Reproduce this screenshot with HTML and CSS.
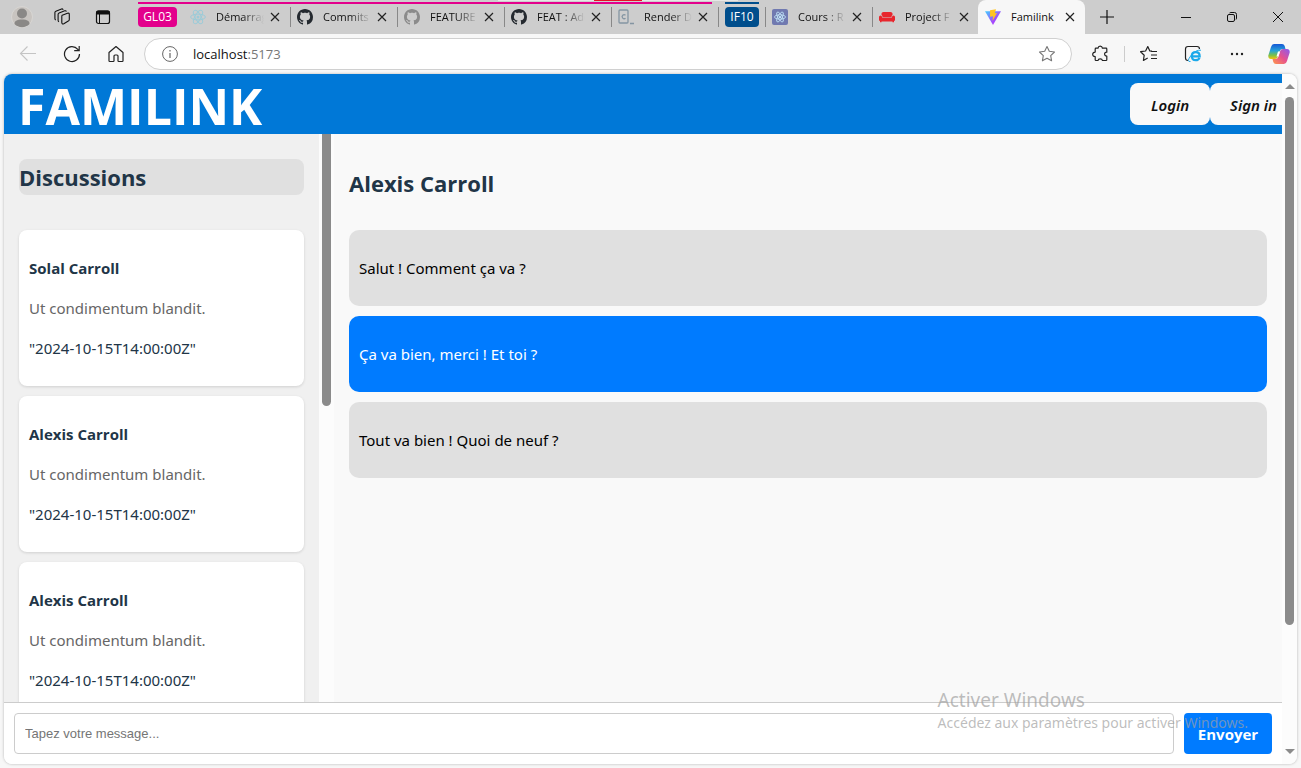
FILE: index.html
```
<!DOCTYPE html>
<html lang="fr">
<head>
<meta charset="utf-8">
<title>Familink</title>
<link rel="stylesheet" href="styles.css">
</head>
<body>
<svg class="defs" aria-hidden="true">
  <symbol id="github" viewBox="0 0 16 16"><path fill="currentColor" d="M8 0C3.58 0 0 3.58 0 8c0 3.54 2.29 6.53 5.47 7.59.4.07.55-.17.55-.38 0-.19-.01-.82-.01-1.49-2.01.37-2.53-.49-2.69-.94-.09-.23-.48-.94-.82-1.13-.28-.15-.68-.52-.01-.53.63-.01 1.08.58 1.23.82.72 1.21 1.87.87 2.33.66.07-.52.28-.87.51-1.07-1.78-.2-3.64-.89-3.64-3.95 0-.87.31-1.59.82-2.15-.08-.2-.36-1.02.08-2.12 0 0 .67-.21 2.2.82.64-.18 1.32-.27 2-.27s1.36.09 2 .27c1.53-1.04 2.2-.82 2.2-.82.44 1.1.16 1.92.08 2.12.51.56.82 1.27.82 2.15 0 3.07-1.87 3.75-3.65 3.95.29.25.54.73.54 1.48 0 1.07-.01 1.93-.01 2.2 0 .21.15.46.55.38A8.01 8.01 0 0 0 16 8c0-4.42-3.58-8-8-8z"/></symbol>
  <symbol id="close" viewBox="0 0 10 10"><path d="M1 1l8 8M9 1l-8 8" fill="none" stroke="currentColor" stroke-width="1.2"/></symbol>
  <symbol id="atom" viewBox="0 0 16 16"><g fill="none" stroke="currentColor" stroke-width="1"><ellipse cx="8" cy="8" rx="7.4" ry="2.9"/><ellipse cx="8" cy="8" rx="7.4" ry="2.9" transform="rotate(60 8 8)"/><ellipse cx="8" cy="8" rx="7.4" ry="2.9" transform="rotate(120 8 8)"/></g><circle cx="8" cy="8" r="1.5" fill="currentColor"/></symbol>
  <symbol id="star" viewBox="0 0 18 18"><path d="M9 1.500l2.300 4.800 5.200.7-3.800 3.600.9 5.200L9 13.300l-4.600 2.500.9-5.200L1.500 7l5.200-.7z" fill="none" stroke="currentColor" stroke-width="1.100" stroke-linejoin="round"/></symbol>
</svg>
<div class="browser">
  <div class="tabstrip">
    <span class="snip" aria-hidden="true"></span>
    <div class="strip-tools">
      <button class="icon-btn" aria-label="Profil"><svg width="22" height="22" viewBox="0 0 22 22"><circle cx="11" cy="11" r="10.500" fill="#c8c4c0" stroke="#d8d6d3"/><circle cx="11" cy="7.500" r="5" fill="#8a8886"/><path d="M3.500 18c0-3 2-4.500 7.500-4.500s7.500 1.500 7.500 4.500a10.500 10.500 0 0 1-15 0z" fill="#8a8886"/></svg></button>
      <button class="icon-btn" aria-label="Espaces de travail"><svg width="18" height="18" viewBox="0 0 18 18" fill="none" stroke="#111" stroke-width="1.100" stroke-linejoin="round"><path d="M9.200 7.200l5.300-2q1.800-.4 1.800 1.200v5q0 1.200-1 1.700l-4.500 2.600q-2 .8-2-1.200V8.400q0-.8.400-1.200z"/><path d="M6 13.800q-.9-.4-.9-1.600V6.400q0-1 1-1.400l5.600-2.200q1.300-.4 1.600.8"/><path d="M2.800 12q-.9-.4-.9-1.600V4.600q0-1 1-1.400L8.500 1q1.300-.4 1.600.8"/></svg></button>
      <button class="icon-btn" aria-label="Onglets verticaux"><svg width="16" height="16" viewBox="0 0 16 16"><rect x="1.500" y="2" width="13" height="12.500" rx="2" fill="none" stroke="#111" stroke-width="1.200"/><path d="M1 5.500V3.500a2 2 0 0 1 2-2h10a2 2 0 0 1 2 2v2z" fill="#111"/><path d="M4.500 5v9.500" stroke="#111"/></svg></button>
    </div>
    <div class="group group-pink">
      <span class="tag tag-pink">GL03</span>
      <div class="tab first"><svg class="fav atom-pale"><use href="#atom"/></svg><span class="label">Démarrage</span><button class="x" aria-label="Fermer"><svg><use href="#close"/></svg></button></div>
      <div class="tab"><svg class="fav gh"><use href="#github"/></svg><span class="label">Commits</span><button class="x" aria-label="Fermer"><svg><use href="#close"/></svg></button></div>
      <div class="tab"><svg class="fav gh-pale"><use href="#github"/></svg><span class="label">FEATURE</span><button class="x" aria-label="Fermer"><svg><use href="#close"/></svg></button></div>
      <div class="tab"><svg class="fav gh"><use href="#github"/></svg><span class="label">FEAT : Add</span><button class="x" aria-label="Fermer"><svg><use href="#close"/></svg></button></div>
      <div class="tab"><svg class="fav" viewBox="0 0 16 16" fill="none" stroke="#8495a2" stroke-width="1.300"><rect x="1" y="1" width="9" height="13" rx="1"/><path d="M7.500 6.200a2 2 0 1 0 0 3M12 14.500h4"/></svg><span class="label">Render D</span><button class="x" aria-label="Fermer"><svg><use href="#close"/></svg></button></div>
    </div>
    <div class="tagslot"><span class="tag tag-blue">IF10</span></div>
    <div class="tab"><svg class="fav atom-box" viewBox="0 0 16 16"><use href="#atom" x="2" y="2" width="12" height="12"/></svg><span class="label">Cours : R</span><button class="x" aria-label="Fermer"><svg><use href="#close"/></svg></button></div>
    <div class="tab"><svg class="fav fav-sofa" viewBox="0 0 16 16" fill="#e8262d"><path d="M2.500 6V4.500Q2.500 3 4.500 3h7q2 0 2 1.500V6q-1 .3-1 2h-9q0-1.700-1-2z"/><path d="M0 8q0-1.500 1.500-1.500T3 8v.6h10V8q0-1.500 1.500-1.500T16 8v3q0 1-1 1v1.300h-1.500V12.500h-11v.8H1V12q-1 0-1-1z"/></svg><span class="label">Project F</span><button class="x" aria-label="Fermer"><svg><use href="#close"/></svg></button></div>
    <div class="tab active"><svg class="fav" viewBox="0 0 16 16"><defs><linearGradient id="v" x1="0" y1="0" x2="1" y2="1"><stop offset="0" stop-color="#41d1ff"/><stop offset=".6" stop-color="#a14bfe"/><stop offset="1" stop-color="#bd34fe"/></linearGradient></defs><path d="M0 2.200L16 2.200 8 16z" fill="url(#v)"/><path d="M5 1.200l6-1-1.200 4 2.200-.3-4.500 8 .6-4.700-3 .5z" fill="#ffc422"/></svg><span class="label">Familink</span><button class="x" aria-label="Fermer"><svg><use href="#close"/></svg></button></div>
    <button class="icon-btn plus" aria-label="Nouvel onglet"><svg width="14" height="14" viewBox="0 0 14 14" stroke="#111" stroke-width="1.200"><path d="M7 0v14M0 7h14"/></svg></button>
    <div class="window-tools">
      <button class="icon-btn" aria-label="Réduire"><svg width="10" height="10" viewBox="0 0 10 10" stroke="#111"><path d="M0 5.500h10"/></svg></button>
      <button class="icon-btn" aria-label="Restaurer"><svg width="10" height="10" viewBox="0 0 10 10" fill="none" stroke="#111"><rect x=".5" y="2.500" width="7" height="7" rx="1.500"/><path d="M2.500 1Q3 .5 4 .5h3.500q2 0 2 2V6q0 1-.5 1.500"/></svg></button>
      <button class="icon-btn" aria-label="Fermer la fenêtre"><svg width="10" height="10" viewBox="0 0 10 10" stroke="#111"><path d="M0 0l10 10M10 0L0 10"/></svg></button>
    </div>
  </div>

  <div class="toolbar">
    <div class="nav-tools">
      <button class="icon-btn" aria-label="Précédent"><svg width="18" height="18" viewBox="0 0 18 18" fill="none" stroke="#c4c4c4" stroke-width="1.100"><path d="M17 8.500H1.500M8.500 1.500l-7 7 7 7"/></svg></button>
      <button class="icon-btn" aria-label="Actualiser"><svg width="18" height="18" viewBox="0 0 18 18" fill="none" stroke="#222" stroke-width="1.200"><path d="M16.500 9A7.500 7.500 0 1 1 14.800 4.300L16 5.500M16.200 1v4.700h-5"/></svg></button>
      <button class="icon-btn" aria-label="Accueil"><svg width="18" height="18" viewBox="0 0 18 18" fill="none" stroke="#222" stroke-width="1.200" stroke-linejoin="round"><path d="M2 7.500L9 1.500l7 6v8.200q0 .8-.8.800h-3.400q-.8 0-.8-.8V11q0-1-1-1H8q-1 0-1 1v4.700q0 .8-.8.800H2.800q-.8 0-.8-.8z"/></svg></button>
    </div>
    <div class="address">
      <svg width="16" height="16" viewBox="0 0 16 16" fill="none" stroke="#666"><circle cx="8" cy="8" r="7.400"/><path d="M8 7v5M8 4v1.500" stroke-width="1.200"/></svg>
      <span class="url">localhost<span class="port">:5173</span></span>
      <svg class="fave" width="18" height="18"><use href="#star"/></svg>
    </div>
    <div class="ext-tools">
      <button class="icon-btn" aria-label="Extensions"><svg width="18" height="18" viewBox="0 0 18 18" fill="none" stroke="#222" stroke-width="1.200" stroke-linejoin="round"><path d="M5 3.200h2Q7.300 1.200 9.200 1.200t2.200 2H15q.8 0 .8.800v3.200q-2.200 0-2.200 1.900t2.200 1.900v3.700q0 .8-.8.800h-3.600q-.2-1.600-2.200-1.600T7 15.500H5q-.8 0-.8-.8v-3.200Q1.700 11.500 1.700 9.300t2.500-2.200V4q0-.8.800-.8z"/></svg></button>
      <span class="sep"></span>
      <button class="icon-btn" aria-label="Favoris"><svg width="18" height="18" viewBox="0 0 18 18" fill="none" stroke="#222" stroke-width="1.200" stroke-linejoin="round"><path d="M12 6.200L9.800 5.900 7.800 1.500 5.600 6l-5 .7 3.600 3.500-.8 5.300 4.300-2.400M11 6.500h6M11 10h6M11 13.500h6"/></svg></button>
      <button class="icon-btn" aria-label="Mode Internet Explorer"><svg width="18" height="18" viewBox="0 0 18 18" fill="none"><path d="M4 15.500q-2.500 0-2.500-2.500V4q0-2.500 2.500-2.500h9q2.500 0 2.500 2.500" stroke="#222" stroke-width="1.200"/><path d="M15.500 12.800q-1 2.400-3.700 2.400-4 0-4-4t4-4q3.900 0 3.900 4.200H8" stroke="#1ca9ea" stroke-width="2.200"/><path d="M6.500 16.500Q2 17 7 10.500q5-6 10-5.300" stroke="#1ca9ea"/></svg></button>
      <button class="icon-btn" aria-label="Paramètres"><svg width="14" height="4" viewBox="0 0 14 4" fill="#222"><circle cx="2" cy="2" r="1.200"/><circle cx="7" cy="2" r="1.200"/><circle cx="12" cy="2" r="1.200"/></svg></button>
      <button class="icon-btn" aria-label="Copilot"><svg width="22" height="22" viewBox="0 0 22 22"><defs><linearGradient id="c1" x1="0" y1="0" x2="0" y2="1"><stop offset="0" stop-color="#1558d6"/><stop offset=".45" stop-color="#27a3d8"/><stop offset=".75" stop-color="#79c14a"/><stop offset="1" stop-color="#f4c20d"/></linearGradient><linearGradient id="c2" x1="1" y1="0" x2="0" y2="1"><stop offset="0" stop-color="#8a5bf0"/><stop offset=".5" stop-color="#e6518f"/><stop offset="1" stop-color="#ff9a4a"/></linearGradient></defs><path d="M6 1h8q2 0 2.700 2l.8 3h-3q-2 0-2.700 2l-2 6q-.8 2-2.800 2H3Q0 16 .3 12.500L3 4q.8-3 3-3z" fill="url(#c1)"/><path d="M16 21H8q-2 0-2.700-2l-.8-3h3q2 0 2.700-2l2-6q.8-2 2.800-2h4q3 0 2.700 3.500L19 18q-.8 3-3 3z" fill="url(#c2)"/><path d="M10 8.500h2l-1.500 5h-2z" fill="#fff"/></svg></button>
    </div>
  </div>

  <div class="viewport">
    <div class="app">
      <header class="app-header">
        <h1>FAMILINK</h1>
        <nav class="auth"><button class="auth-btn">Login</button><button class="auth-btn">Sign in</button></nav>
      </header>
      <div class="columns">
        <aside class="sidebar">
          <h2 class="side-title">Discussions</h2>
          <article class="card"><p class="name">Solal Carroll</p><p class="excerpt">Ut condimentum blandit.</p><p>"2024-10-15T14:00:00Z"</p></article>
          <article class="card"><p class="name">Alexis Carroll</p><p class="excerpt">Ut condimentum blandit.</p><p>"2024-10-15T14:00:00Z"</p></article>
          <article class="card"><p class="name">Alexis Carroll</p><p class="excerpt">Ut condimentum blandit.</p><p>"2024-10-15T14:00:00Z"</p></article>
        </aside>
        <div class="side-scroll"><span class="thumb"></span></div>
        <main class="chat">
          <h2 class="chat-title">Alexis Carroll</h2>
          <p class="msg">Salut ! Comment ça va ?</p>
          <p class="msg mine">Ça va bien, merci ! Et toi ?</p>
          <p class="msg">Tout va bien ! Quoi de neuf ?</p>
        </main>
      </div>
      <form class="composer">
        <input type="text" placeholder="Tapez votre message..." aria-label="Message">
        <button type="button" class="send">Envoyer</button>
      </form>
    </div>
    <div class="page-scroll"><span class="arrow up"></span><span class="rail"><span class="thumb"></span></span><span class="arrow down"></span></div>
  </div>
</div>
<div class="watermark"><p class="wm-title">Activer Windows</p><p>Accédez aux paramètres pour activer Windows.</p></div>
</body>
</html>
```
FILE: styles.css
```
* { box-sizing: border-box; }
body { margin: 0; font-family: "Noto Sans", "Open Sans", sans-serif; font-size: 15px; line-height: 24px; color: #213547; background: #f7f7f7; }
h1, h2, p { margin: 0; }
button { font: inherit; border: 0; cursor: pointer; }
.defs { position: absolute; width: 0; height: 0; }
.browser { display: flex; flex-direction: column; height: 100vh; overflow: hidden; font-family: inherit; }
.icon-btn { display: flex; align-items: center; justify-content: center; padding: 0; background: none; flex: none; }

.tabstrip { position: relative; display: flex; height: 34px; flex: none; background: #cdcdcd; color: #111; font-family: "Open Sans", sans-serif; font-size: 12px; line-height: 20px; }
.snip { position: absolute; left: 498px; top: 0; width: 240px; height: 1px; background: linear-gradient(90deg, #e6e6e6 96px, #e81123 96px, #e81123 144px, #e6e6e6 144px); }
.strip-tools { display: flex; align-items: center; width: 138px; flex: none; padding-left: 11px; gap: 20px; }
.strip-tools .icon-btn:last-child { margin-left: 4px; }
.group { display: flex; position: relative; margin-right: 6px; }
.group::before { content: ""; position: absolute; left: 0; right: 6px; top: 2px; height: 2px; background: #e3008c; }
.tag { align-self: center; height: 20px; border-radius: 4px; color: #fff; text-align: center; }
.tag-pink { width: 39px; background: #e3008c; margin-right: 6px; }
.tagslot { display: flex; position: relative; width: 41px; margin-left: -6px; margin-right: 6px; padding-left: 7px; flex: none; }
.tagslot::before, .tab::before { content: ""; position: absolute; left: 0; top: 7px; height: 20px; width: 1px; background: #888; }
.tagslot::after { content: ""; position: absolute; left: 7px; right: 0; top: 2px; height: 2px; background: #004e8c; }
.tag-blue { width: 34px; background: #004e8c; }
.tab { position: relative; display: flex; align-items: center; width: 107px; flex: none; padding-left: 7px; }
.tab.first::before, .tab.active::before { display: none; }
.fav { width: 16px; height: 16px; flex: none; margin-right: 10px; }
.label { width: 48px; font-size: 11px; overflow: hidden; white-space: nowrap; mask-image: linear-gradient(90deg, #000 55%, transparent); }
.x { display: flex; padding: 0; margin-left: 6px; background: none; color: #222; }
.x svg { width: 10px; height: 10px; }
.gh { color: #24292f; }
.gh-pale { color: #8b8b8b; }
.atom-pale { color: #9ccbd8; }
.atom-box { background: #7079b0; border-radius: 2px; color: #c9f0ff; }
.active { background: #f7f7f7; border-radius: 8px 8px 0 0; margin-left: -1px; }
.active .label { mask-image: none; }
.plus { margin-left: 15px; }
.window-tools { display: flex; margin-left: auto; gap: 36px; padding-right: 18px; }

.toolbar { display: flex; align-items: center; height: 40px; flex: none; }
.nav-tools { display: flex; gap: 26px; padding: 0 19px; }
.address { flex: 1; display: flex; align-items: center; height: 32px; padding: 0 15px 0 17px; border: 1px solid #d0d0d0; border-radius: 16px; background: #fff; color: #111; font-family: "Open Sans", sans-serif; font-size: 13px; }
.url { flex: 1; margin-left: 15px; }
.port { color: #777; }
.fave { color: #777; }
.ext-tools { display: flex; align-items: center; padding: 0 11px 0 19px; gap: 15px; }
.ext-tools .icon-btn { min-width: 18px; }
.ext-tools .icon-btn:nth-child(n+4) { margin-left: 11px; }
.ext-tools .icon-btn:last-child { margin-left: 7px; }
.sep { width: 1px; height: 16px; background: #ccc; }

.viewport { flex: 1; min-height: 0; display: flex; margin: 0 4px 4px; border-radius: 8px; overflow: hidden; background: #fcfcfc; box-shadow: 0 0 3px #0004; }
.app { flex: 1; min-width: 0; display: flex; flex-direction: column; }
.app-header { display: flex; align-items: center; justify-content: space-between; height: 60px; flex: none; overflow: hidden; padding-left: 14px; background: #0078d7; }
.app-header h1 { font-family: "Open Sans", sans-serif; font-size: 50px; line-height: 60px; color: #fff; padding-top: 4px; }
.auth { display: flex; margin-right: -15px; }
.auth-btn { height: 42px; min-width: 80px; padding: 2px 20px 0; border-radius: 8px; background: #f9f9f9; color: #111; font-weight: 600; font-style: italic; white-space: nowrap; }
.columns { flex: 1; min-height: 0; display: flex; }
.sidebar { width: 315px; flex: none; padding: 25px 15px 0; background: #f0f0f0; overflow: hidden; }
.side-title, .chat-title { font-family: "Open Sans", sans-serif; font-size: 22px; line-height: 36px; }
.side-title { margin-bottom: 35px; border-radius: 8px; background: #e0e0e0; }
.card { display: grid; gap: 16px; padding: 26px 10px; margin-bottom: 10px; border-radius: 8px; background: #fff; box-shadow: 0 1px 3px #0002; }
.name { font-family: "Open Sans", sans-serif; font-weight: 700; }
.excerpt { color: #666; }
.side-scroll { width: 15px; flex: none; background: #fcfcfc; }
.thumb { display: block; width: 9px; margin: 0 auto; background: #8b8b8b; border-radius: 5px; }
.side-scroll .thumb { height: 272px; border-radius: 0 0 5px 5px; }
.chat { flex: 1; min-width: 0; display: flex; flex-direction: column; gap: 10px; padding: 31px 15px 0; background: #f9f9f9; }
.chat-title { margin-bottom: 19px; }
.msg { padding: 26px 10px; border-radius: 10px; background: #e0e0e0; color: #000; }
.mine { background: #007bff; color: #fff; }
.composer { display: flex; gap: 10px; padding: 10px; border-top: 1px solid #ccc; background: #fff; }
.composer input { flex: 1; min-width: 0; height: 41px; padding: 0 10px; border: 1px solid #ccc; border-radius: 4px; font: 13px "Liberation Sans", Arial, sans-serif; }
.composer input::placeholder { color: #757575; }
.send { width: 88px; padding: 0; border-radius: 4px; background: #007bff; color: #fff; font-family: "Open Sans", sans-serif; font-weight: 700; }
.page-scroll { display: flex; flex-direction: column; align-items: center; width: 15px; flex: none; padding: 10px 0; background: #fcfcfc; }
.rail { flex: 1; padding-top: 8px; }
.page-scroll .thumb { height: 81%; }
.arrow { border: 5px solid transparent; border-top: 0; border-bottom: 5px solid #8b8b8b; }
.arrow.down { border-bottom: 0; border-top: 5px solid #8b8b8b; }

.watermark { position: absolute; right: 53px; bottom: 34px; color: #a0a0a0b0; font-size: 14px; line-height: 22px; pointer-events: none; }
.wm-title { font-size: 19px; line-height: 24px; }
```
